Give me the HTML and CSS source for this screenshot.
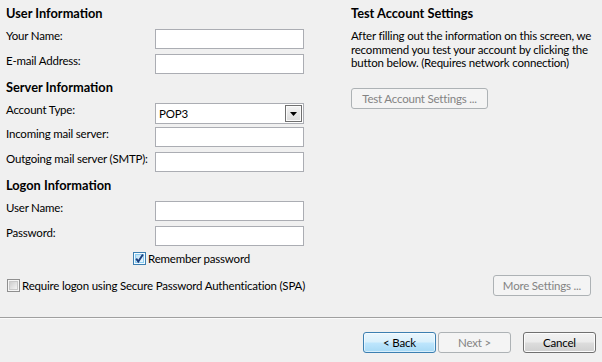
FILE: index.html
```html
<!DOCTYPE html>
<html lang="en">
<head>
<meta charset="utf-8">
<title>Add New E-mail Account</title>
<link rel="stylesheet" href="styles.css">
</head>
<body>
<div class="dialog">
  <div class="content">
    <div class="left">
      <div class="section-title">User Information</div>
      <div class="field-row"><label class="field-label">Your Name:</label><input class="textbox" type="text"></div>
      <div class="field-row"><label class="field-label">E-mail Address:</label><input class="textbox" type="text"></div>

      <div class="section-title">Server Information</div>
      <div class="field-row field-row-combo"><label class="field-label">Account Type:</label>
        <div class="combo"><span class="combo-value">POP3</span><span class="combo-button"><svg width="7" height="4" viewBox="0 0 7 4"><path d="M0 0H7L3.5 4Z" fill="#000"/></svg></span></div>
      </div>
      <div class="field-row"><label class="field-label">Incoming mail server:</label><input class="textbox" type="text"></div>
      <div class="field-row"><label class="field-label">Outgoing mail server (SMTP):</label><input class="textbox" type="text"></div>

      <div class="section-title">Logon Information</div>
      <div class="field-row"><label class="field-label">User Name:</label><input class="textbox" type="text"></div>
      <div class="field-row"><label class="field-label">Password:</label><input class="textbox" type="text"></div>

      <div class="check-row check-remember">
        <span class="checkbox"><svg width="13" height="13" viewBox="0 0 13 13">
          <defs><linearGradient id="cbOn" x1="0" y1="0" x2="1" y2="1"><stop offset="0" stop-color="#b9def5"/><stop offset="1" stop-color="#eef8fe"/></linearGradient></defs>
          <rect x="0.5" y="0.5" width="12" height="12" fill="#f4fbff" stroke="#3c7fb1"/>
          <rect x="2.5" y="2.5" width="8" height="8" fill="url(#cbOn)" stroke="#8ccdf2"/>
          <path d="M3.2 6.6L5.3 9.6L9.9 2.6" fill="none" stroke="#1c3f7e" stroke-width="1.9"/>
        </svg></span>
        <span class="check-text">Remember password</span>
      </div>
      <div class="check-row check-spa">
        <span class="checkbox"><svg width="13" height="13" viewBox="0 0 13 13">
          <defs><linearGradient id="cbOff" x1="0" y1="0" x2="1" y2="1"><stop offset="0" stop-color="#cbcbcb"/><stop offset="1" stop-color="#f7f7f7"/></linearGradient></defs>
          <rect x="0.5" y="0.5" width="12" height="12" fill="#f6f6f6" stroke="#8f8f8f"/>
          <rect x="2.5" y="2.5" width="8" height="8" fill="url(#cbOff)" stroke="#c9c9c9"/>
        </svg></span>
        <span class="check-text">Require logon using Secure Password Authentication (SPA)</span>
      </div>
    </div>

    <div class="right">
      <div class="section-title">Test Account Settings</div>
      <p class="description">After filling out the information on this screen, we<br>recommend you test your account by clicking the<br>button below. (Requires network connection)</p>
      <button class="btn btn-disabled btn-test" type="button">Test Account Settings ...</button>
      <button class="btn btn-disabled btn-more" type="button">More Settings ...</button>
    </div>
  </div>
  <div class="separator"></div>
  <div class="footer">
    <button class="btn btn-default" type="button">&lt; Back</button>
    <button class="btn btn-disabled btn-next" type="button">Next &gt;</button>
    <button class="btn btn-normal btn-cancel" type="button">Cancel</button>
  </div>
</div>
</body>
</html>
```
FILE: styles.css
```css
html, body {
  margin: 0;
  padding: 0;
  background: #f0f0f0;
}

body {
  font-family: "Lato", "Liberation Sans", sans-serif;
  font-size: 11.5px;
  letter-spacing: -0.2px;
  color: #000;
}

.dialog {
  width: 602px;
  height: 362px;
  display: flex;
  flex-direction: column;
}

.content {
  height: 317px;
  display: flex;
  gap: 40px;
}

.left {
  width: 305px;
  padding: 3px 0 0 6px;
  white-space: nowrap;
}

.section-title {
  box-sizing: border-box;
  height: 24px;
  padding-top: 3px;
  font-weight: 700;
  font-size: 12.8px;
  letter-spacing: 0;
  line-height: 15px;
}

.field-row {
  display: flex;
  align-items: flex-start;
  height: 25px;
}

.field-row-combo {
  height: 24px;
}

.field-label {
  width: 149px;
  flex: none;
  padding-top: 1px;
  line-height: 15px;
}

.textbox {
  box-sizing: border-box;
  width: 149px;
  height: 20px;
  margin: 2px 0 0;
  padding: 0;
  border: 1px solid #abadb3;
  background: #fff;
  font: inherit;
  outline: none;
}

.combo {
  box-sizing: border-box;
  width: 149px;
  height: 21px;
  margin-top: 2px;
  padding: 1px;
  border: 1px solid #abadb3;
  background: #fff;
  display: flex;
  align-items: center;
}

.combo-value {
  flex: 1;
  padding-left: 2px;
  line-height: 15px;
}

.combo-button {
  box-sizing: border-box;
  width: 17px;
  height: 17px;
  border: 1px solid #707070;
  background: linear-gradient(#f4f4f4, #dcdcdc);
  box-shadow: inset 0 0 0 1px #fbfbfb;
  display: flex;
  align-items: center;
  justify-content: center;
}

.combo-button svg {
  display: block;
}

.check-row {
  display: flex;
  align-items: center;
  height: 13px;
  gap: 2px;
  line-height: 15px;
}

.checkbox {
  width: 13px;
  height: 13px;
  flex: none;
}

.checkbox svg {
  display: block;
}

.check-remember {
  margin: 3px 0 0 127px;
}

.check-spa {
  margin: 14px 0 0 1px;
}

.right {
  width: 240px;
  padding-top: 3px;
  display: flex;
  flex-direction: column;
  white-space: nowrap;
}

.description {
  margin: 2px 0 0;
  line-height: 13.5px;
}

.btn {
  box-sizing: border-box;
  height: 21px;
  margin: 0;
  padding: 0;
  border-radius: 3px;
  font: inherit;
  letter-spacing: inherit;
  display: flex;
  align-items: center;
  justify-content: center;
}

.btn-disabled {
  border: 1px solid #adb2b5;
  background: #f4f4f4;
  color: #838383;
}

.btn-default {
  border: 1px solid #3c7fb1;
  background: linear-gradient(#eaf6fd 0%, #d9f0fc 48%, #bee6fd 52%, #a7d9f5 100%);
  box-shadow: inset 0 0 0 1px rgba(255, 255, 255, 0.55);
  color: #000;
}

.btn-normal {
  border: 1px solid #707070;
  background: linear-gradient(#f2f2f2 0%, #ebebeb 48%, #dddddd 52%, #cfcfcf 100%);
  box-shadow: inset 0 0 0 1px #fcfcfc;
  color: #000;
}

.btn-test {
  width: 137px;
  margin-top: 18px;
}

.btn-more {
  width: 98px;
  margin-top: auto;
  margin-bottom: 21px;
  align-self: flex-end;
}

.separator {
  height: 1px;
  background: #a0a0a0;
  border-bottom: 1px solid #fbfbfb;
}

.footer {
  flex: 1;
  display: flex;
  justify-content: flex-end;
  align-items: flex-start;
  padding: 13px 6px 0 0;
}

.footer .btn {
  width: 73px;
}

.btn-next {
  margin-left: 2px;
}

.btn-cancel {
  margin-left: 12px;
}
```
